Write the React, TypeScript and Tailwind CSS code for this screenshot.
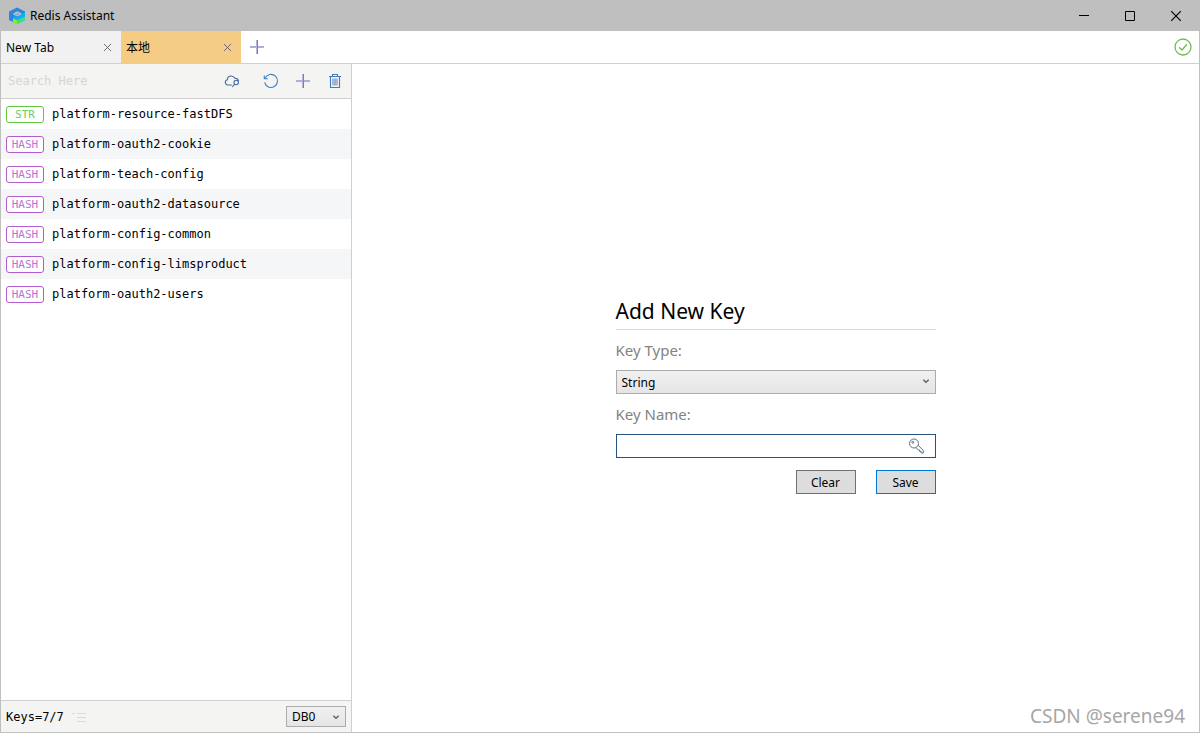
import React, { useState } from "react";

interface RedisKey {
  type: "STR" | "HASH";
  name: string;
}

const KEYS: RedisKey[] = [
  { type: "STR", name: "platform-resource-fastDFS" },
  { type: "HASH", name: "platform-oauth2-cookie" },
  { type: "HASH", name: "platform-teach-config" },
  { type: "HASH", name: "platform-oauth2-datasource" },
  { type: "HASH", name: "platform-config-common" },
  { type: "HASH", name: "platform-config-limsproduct" },
  { type: "HASH", name: "platform-oauth2-users" },
];

const TABS = ["New Tab", "本地"];

function Logo() {
  return (
    <svg width="18" height="18" viewBox="0 0 18 18" className="flex-shrink-0">
      <path d="M8 .5 16 4.500v8.500l-8 4-8-4V4.500z" fill="#2b86e0" />
      <path d="M16 5v5l-8 3.500-3.500-1.700V9L8 10.500z" fill="#08b0f5" />
      <path d="M4.500 6.300 8.300 4.300l4 2v1.400L8.300 9.500 4.500 7.700z" fill="#bfbfbf" />
      <path d="M5.500 7.200 8.300 6l3 1.200-3 1.500z" fill="#7fb4dc" />
      <path d="M8 13.300l8-3.800v3.800l-8 4z" fill="#3fdc88" />
      <path d="M4 11.300 8 13.300v4l-4-2z" fill="#8df01e" />
    </svg>
  );
}

function CrossIcon({ size }: { size: number }) {
  return (
    <svg width={size} height={size} viewBox="0 0 10 10" fill="none" stroke="currentColor" strokeWidth="1">
      <path d="M1 1l8 8M9 1 1 9" />
    </svg>
  );
}

function PlusIcon() {
  return (
    <svg width="16" height="16" viewBox="0 0 16 16" fill="none">
      <path d="M1 8h14" stroke="#a6b4dc" strokeWidth="2" />
      <path d="M7.500 1v14" stroke="#b9b0d6" strokeWidth="1" />
      <path d="M8.500 1v14" stroke="#5a8cc6" strokeWidth="1" />
    </svg>
  );
}

function CloudSearchIcon() {
  return (
    <svg width="16" height="16" viewBox="0 0 16 16" fill="none" stroke="#456b9c" strokeWidth="1.100">
      <path d="M7.800 12H3.800a2.700 2.700 0 0 1-.5-5.300C3.500 4.500 5 3 7.200 3c1.700 0 3 .9 3.600 2.300 2-.1 3.400 1 3.700 2.800" />
      <circle cx="12.200" cy="9.500" r="2.200" />
      <path d="M10.700 11.200 8.300 14" />
    </svg>
  );
}

function ReloadIcon() {
  return (
    <svg width="16" height="16" viewBox="0 0 16 16" fill="none" stroke="#3f7fc6" strokeWidth="1.100">
      <path d="M2.200 5A6.500 6.500 0 1 1 1.700 9.500" />
      <path d="M1.300 2.500v3.200h3.500" />
    </svg>
  );
}

function TrashIcon() {
  return (
    <svg width="14" height="16" viewBox="0 0 14 16" fill="none" stroke="#3f7cc4" strokeWidth="1.100">
      <path d="M1 3.500h12M4.500 3.300V1.500h5v1.800M2.500 3.500v11h9v-11" />
      <path d="M5 5.500v7M9 5.500v7" stroke="#7485c0" />
      <path d="M7 5.500v7" />
    </svg>
  );
}

function KeyIcon() {
  return (
    <svg width="16" height="16" viewBox="0 0 16 16" fill="none" stroke="#5b6e96" strokeWidth="1">
      <circle cx="6" cy="5.500" r="4.500" />
      <circle cx="4.800" cy="4.300" r="1" />
      <path d="m10.200 7.400 5.100 5V15h-2.100v-1.500h-1.500V12h-1.400L8 9.600" />
    </svg>
  );
}

function Chevron() {
  return (
    <svg
      width="8"
      height="6"
      viewBox="0 0 8 6"
      fill="none"
      stroke="#606060"
      strokeWidth="1.400"
      className="pointer-events-none absolute right-[6px] top-2"
    >
      <path d="M1.300 1.700 4 4.200l2.700-2.500" />
    </svg>
  );
}

function TitleBar() {
  return (
    <header className="flex h-[31px] flex-shrink-0 items-center bg-[#bfbfbf] pl-2">
      <Logo />
      <h1 className="ml-[3px] flex-1 text-xs">Redis Assistant</h1>
      <button type="button" aria-label="Minimize" className="flex h-full w-[46px] items-center justify-center">
        <svg width="10" height="10" viewBox="0 0 10 10" stroke="#000">
          <path d="M0 4.500h10" />
        </svg>
      </button>
      <button type="button" aria-label="Maximize" className="flex h-full w-[46px] items-center justify-center">
        <svg width="10" height="10" viewBox="0 0 10 10" fill="none" stroke="#000">
          <path d="M.5.5h9v9h-9z" />
        </svg>
      </button>
      <button type="button" aria-label="Close" className="flex h-full w-[46px] items-center justify-center">
        <CrossIcon size={12} />
      </button>
    </header>
  );
}

function TabBar({ active, onSelect }: { active: number; onSelect: (i: number) => void }) {
  return (
    <nav className="flex h-[33px] flex-shrink-0 items-stretch border-b border-[#f5cc84]">
      {TABS.map((tab, i) => (
        <div
          key={tab}
          className={`flex w-[120px] items-center pr-[9px] text-xs ${i === active ? "bg-[#f5cc84]" : "bg-[#f1f1f1]"}`}
        >
          <button type="button" onClick={() => onSelect(i)} className="h-full flex-1 pl-[5px] pt-px text-left">
            {tab}
          </button>
          <button type="button" aria-label={`Close ${tab}`} className="text-[#6a5a6a]">
            <CrossIcon size={9} />
          </button>
        </div>
      ))}
      <button type="button" aria-label="Add tab" className="flex w-8 items-center justify-center">
        <PlusIcon />
      </button>
      <div className="ml-auto flex items-center pr-[7px]">
        <svg width="18" height="18" viewBox="0 0 18 18" fill="none" stroke="#6fbb56" strokeWidth="1.300">
          <circle cx="9" cy="9" r="8" />
          <path d="m5 9.300 3 2.700 5-5.700" />
        </svg>
      </div>
    </nav>
  );
}

function Sidebar() {
  const [query, setQuery] = useState("");
  const visible = KEYS.filter((k) => k.name.includes(query));

  return (
    <aside className="flex w-[351px] flex-shrink-0 flex-col border-r border-[#cfcfcf] font-['DejaVu_Sans_Mono',monospace] text-xs">
      {/* Toolbar */}
      <div className="flex h-[35px] flex-shrink-0 items-center border-b border-[#cfcfcf] bg-[#f4f4f2] pr-2">
        <input
          type="text"
          aria-label="Search keys"
          value={query}
          onChange={(e) => setQuery(e.target.value)}
          placeholder="Search Here"
          className="min-w-0 flex-1 bg-transparent pl-[7px] outline-none placeholder:text-[#d3d6d6]"
        />
        <button type="button" aria-label="Search server" className="mr-[23px]">
          <CloudSearchIcon />
        </button>
        <div className="flex items-center gap-4">
          <button type="button" aria-label="Reload">
            <ReloadIcon />
          </button>
          <button type="button" aria-label="Add key">
            <PlusIcon />
          </button>
          <button type="button" aria-label="Delete key" className="flex w-4 justify-center">
            <TrashIcon />
          </button>
        </div>
      </div>

      {/* Keys */}
      <ul className="min-h-0 flex-1 overflow-y-auto">
        {visible.map((k) => (
          <li key={k.name} className="flex h-[30px] items-center gap-2 pl-[5px] even:bg-[#f5f6f8]">
            <span
              className={`flex h-[17px] w-[38px] items-center justify-center rounded-[3px] border bg-white text-[11px] leading-none ${
                k.type === "STR" ? "border-[#5fc93f] text-[#74c95c]" : "border-[#b45bd0] text-[#bd73d5]"
              }`}
            >
              {k.type}
            </span>
            <span>{k.name}</span>
          </li>
        ))}
      </ul>

      {/* Status */}
      <footer className="flex h-8 flex-shrink-0 items-center border-t border-[#cfcfcf] bg-[#f4f4f2] px-[5px]">
        <span>
          Keys={visible.length}/{KEYS.length}
        </span>
        <svg width="16" height="12" viewBox="0 0 16 12" fill="none" stroke="#dadada" className="ml-2">
          <path d="M5 2.500h9M5 6.500h9M5 10.500h9M0 2.500h3" />
        </svg>
        <div className="relative ml-auto">
          <select
            aria-label="Database"
            className="h-[21px] w-[60px] appearance-none border border-[#acacac] bg-linear-to-b from-[#f0f0f0] to-[#e5e5e5] pl-[5px] font-['Noto_Sans',sans-serif] text-xs"
          >
            <option>DB0</option>
            <option>DB1</option>
          </select>
          <Chevron />
        </div>
      </footer>
    </aside>
  );
}

function AddKeyForm() {
  const [name, setName] = useState("");

  return (
    <form className="w-80" onSubmit={(e) => e.preventDefault()}>
      <h2 className="h-7 border-b border-[#dcdcdc] text-[21px] leading-[18px]">Add New Key</h2>
      <label htmlFor="key-type" className="flex h-10 items-center text-[15px] text-[#838383]">
        Key Type:
      </label>
      <div className="relative">
        <select
          id="key-type"
          className="block h-6 w-full appearance-none border border-[#acacac] bg-linear-to-b from-[#f0f0f0] to-[#e5e5e5] pl-[5px] pt-px text-xs"
        >
          <option>String</option>
          <option>Hash</option>
        </select>
        <Chevron />
      </div>
      <label htmlFor="key-name" className="flex h-10 items-center text-[15px] text-[#838383]">
        Key Name:
      </label>
      <div className="relative">
        <input
          id="key-name"
          type="text"
          value={name}
          onChange={(e) => setName(e.target.value)}
          className="block h-6 w-full border border-[#265380] bg-white pl-1 pr-8 text-xs outline-none"
        />
        <span className="pointer-events-none absolute right-3 top-1">
          <KeyIcon />
        </span>
      </div>
      <div className="mt-3 flex justify-end gap-5">
        <button type="button" onClick={() => setName("")} className="h-6 w-[60px] border border-[#707070] bg-[#dddddd] pt-px text-xs">
          Clear
        </button>
        <button type="submit" className="h-6 w-[60px] border border-[#0078d7] bg-[#dddddd] pt-px text-xs">
          Save
        </button>
      </div>
    </form>
  );
}

export default function App() {
  const [active, setActive] = useState(1);

  return (
    <div className="flex h-screen flex-col border-x border-b border-[#bfbfbf] bg-white font-['Noto_Sans','Noto_Sans_CJK_SC',sans-serif] text-black">
      <TitleBar />
      <TabBar active={active} onSelect={setActive} />
      <div className="flex min-h-0 flex-1">
        <Sidebar />
        <main className="relative flex flex-1 items-center justify-center">
          <AddKeyForm />
          <span className="absolute bottom-1 right-[14px] text-[19px] leading-6 text-[#a6a6a6]">CSDN @serene94</span>
        </main>
      </div>
    </div>
  );
}
